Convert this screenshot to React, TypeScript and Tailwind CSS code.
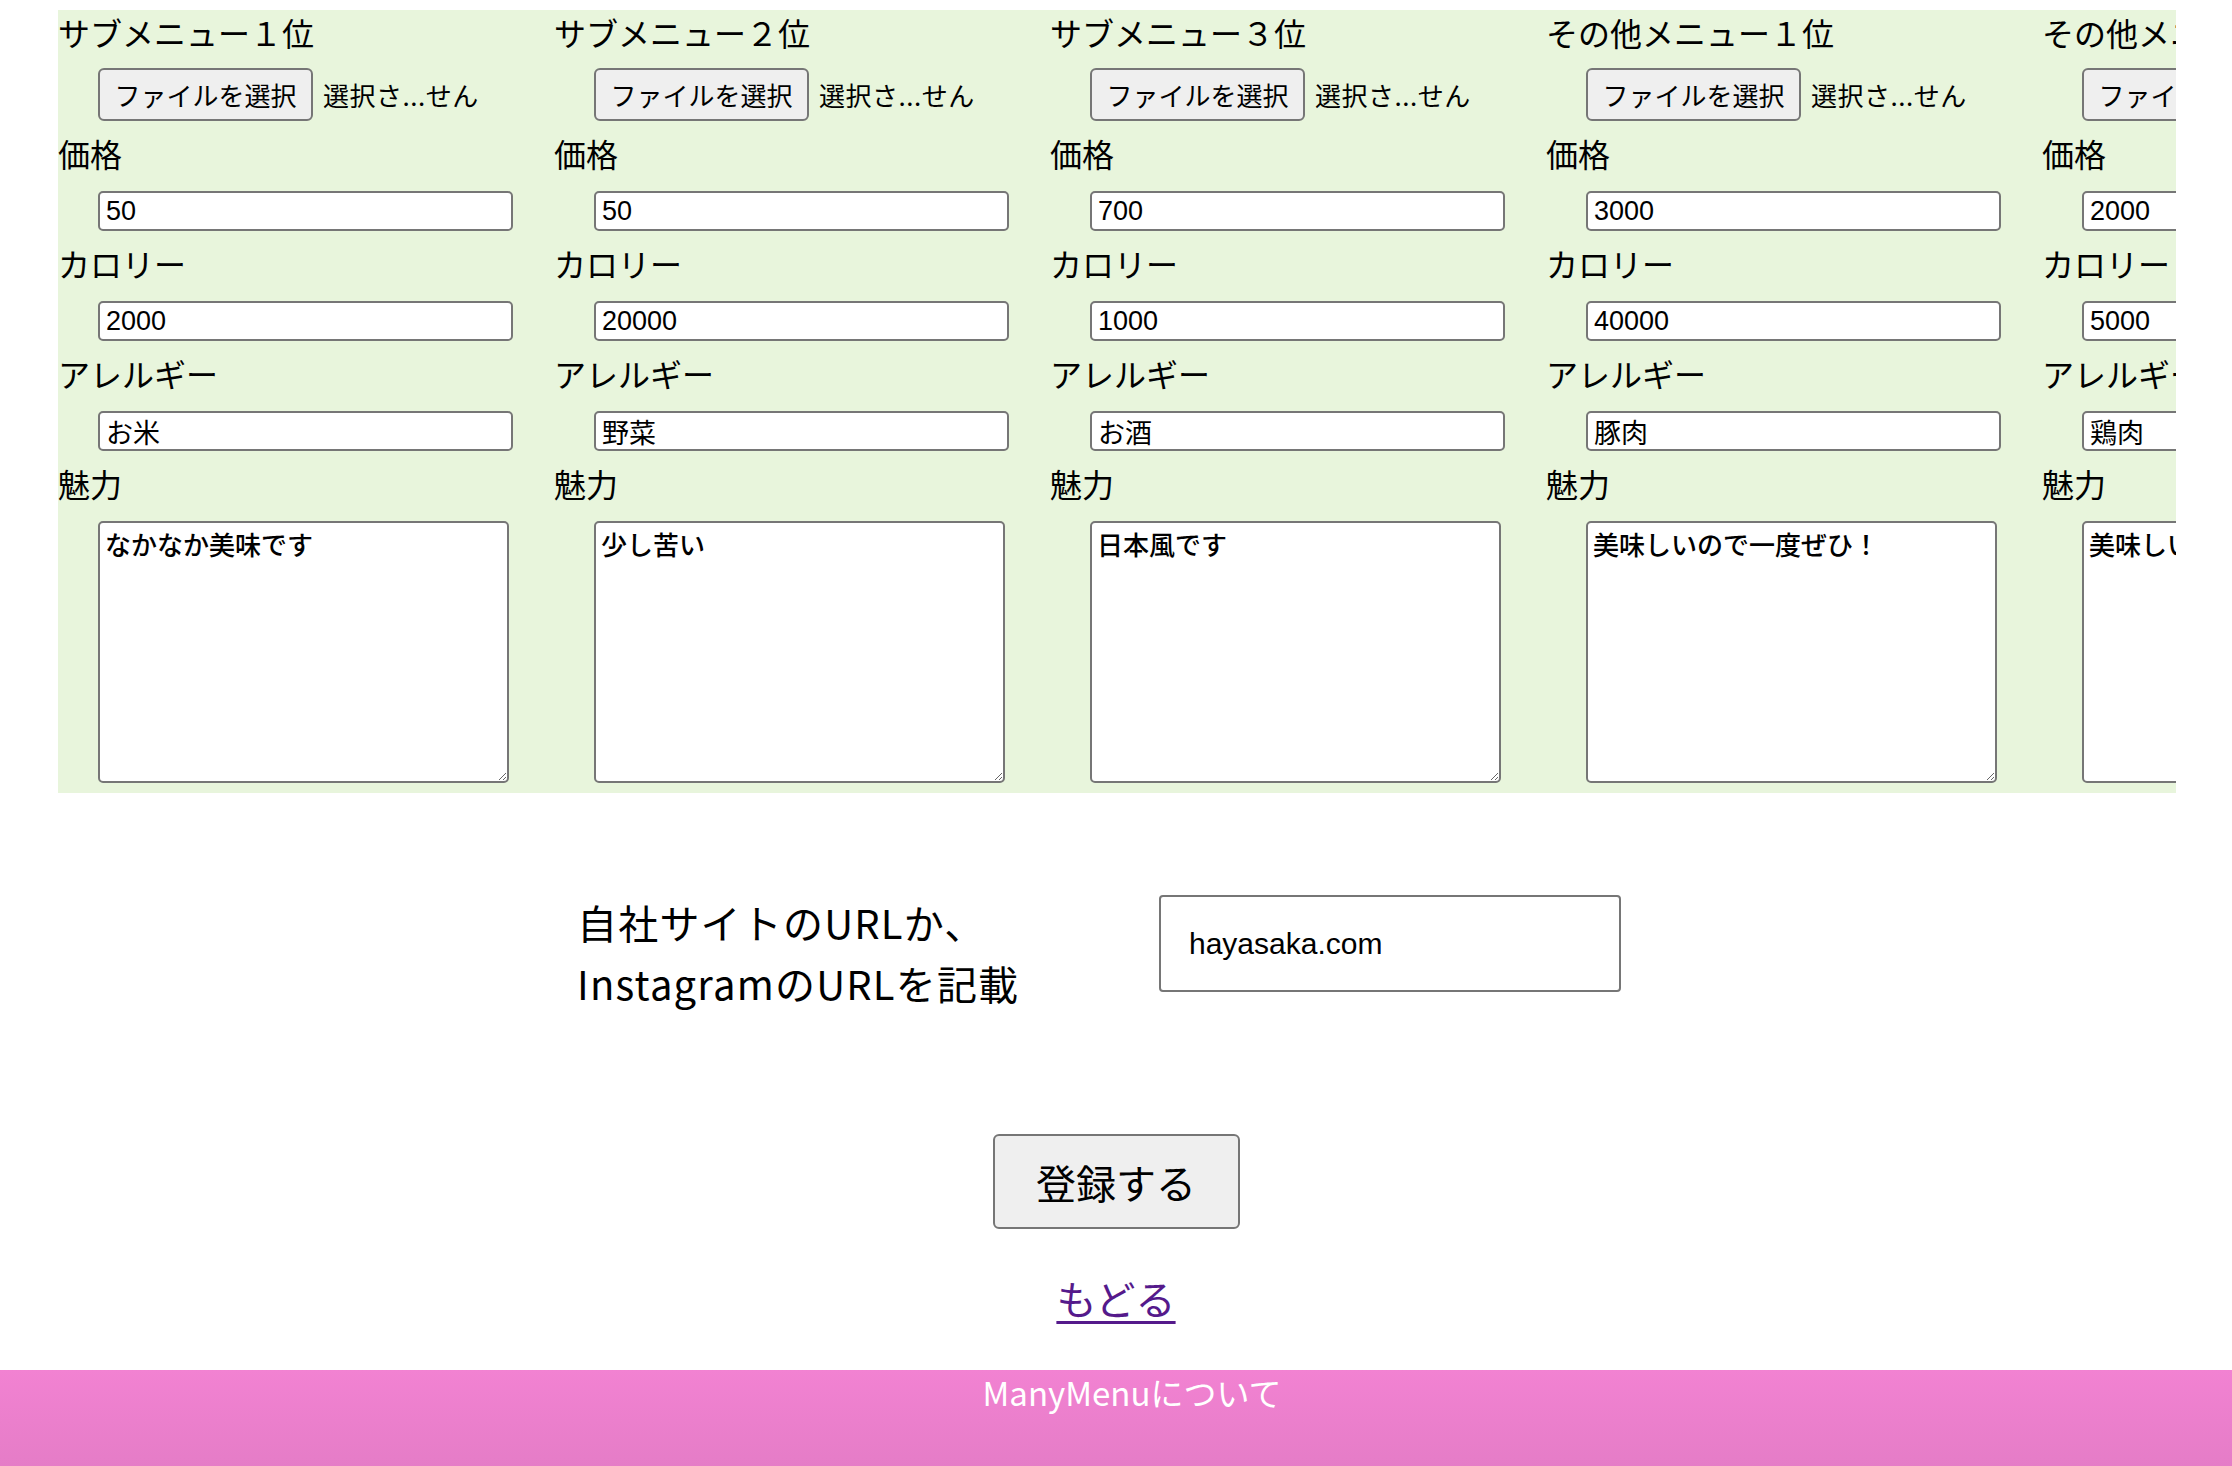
import React from "react";

type Col = {
  title: string;
  price: string;
  cal: string;
  allergy: string;
  charm: string;
};

const cols: Col[] = [
  { title: "サブメニュー１位", price: "50", cal: "2000", allergy: "お米", charm: "なかなか美味です" },
  { title: "サブメニュー２位", price: "50", cal: "20000", allergy: "野菜", charm: "少し苦い" },
  { title: "サブメニュー３位", price: "700", cal: "1000", allergy: "お酒", charm: "日本風です" },
  { title: "その他メニュー１位", price: "3000", cal: "40000", allergy: "豚肉", charm: "美味しいので一度ぜひ！" },
  { title: "その他メニュー２位", price: "2000", cal: "5000", allergy: "鶏肉", charm: "美味しいので一度ぜひ！" },
];

function Label({ children }: { children: React.ReactNode }) {
  return (
    <div className="h-[70px] pb-[6px] flex items-center text-[32px] leading-none text-black whitespace-nowrap">
      {children}
    </div>
  );
}

function TextInput({ value }: { value: string }) {
  return (
    <input
      type="text"
      readOnly
      value={value}
      className="ml-[40px] block w-[415px] h-[40px] box-border border-2 border-[#767676] rounded-[5px] bg-white pl-[6px] text-[27px] leading-none text-black font-['Liberation_Sans','Noto_Sans_CJK_JP',sans-serif] outline-none"
    />
  );
}

function Column({ c }: { c: Col }) {
  return (
    <div className="w-[496px] shrink-0">
      <div className="h-[50px] pb-[6px] flex items-center text-[32px] leading-none whitespace-nowrap">{c.title}</div>
      <div className="mt-[8px] pl-[40px] h-[53px] flex items-center gap-[10px] whitespace-nowrap">
        <button
          type="button"
          className="h-[53px] w-[215px] shrink-0 box-border border-2 border-[#767676] rounded-[6px] bg-[#efefef] text-[26px] leading-none text-black"
        >
          ファイルを選択
        </button>
        <span className="text-[26px] leading-none text-black tracking-[0.5px]">選択さ...せん</span>
      </div>
      <Label>価格</Label>
      <TextInput value={c.price} />
      <Label>カロリー</Label>
      <TextInput value={c.cal} />
      <Label>アレルギー</Label>
      <TextInput value={c.allergy} />
      <Label>魅力</Label>
      <textarea
        readOnly
        value={c.charm}
        className="ml-[40px] block w-[411px] h-[262px] box-border border-2 border-[#767676] rounded-[5px] bg-white px-[5px] py-[3px] text-[26px] leading-[36px] font-medium text-black font-['Noto_Sans_CJK_JP',sans-serif] outline-none"
      />
    </div>
  );
}

export default function App() {
  return (
    <div className="w-[2232px] min-h-[1466px] bg-white text-black font-['Noto_Sans_CJK_JP',sans-serif]">
      <div className="pt-[10px]">
        <div className="ml-[58px] mr-[56px] bg-[#e8f5dc] overflow-hidden pb-[10px]">
          <div className="flex">
            {cols.map((c, i) => (
              <Column key={i} c={c} />
            ))}
          </div>
        </div>
      </div>

      <div className="mt-[102px] pl-[577px] flex items-start">
        <div className="w-[582px] text-[40px] leading-[61px] tracking-[1.2px] -mt-[3px]">
          <div>自社サイトのURLか、</div>
          <div>InstagramのURLを記載</div>
        </div>
        <div className="w-[462px] h-[97px] box-border border-2 border-[#767676] rounded-[4px] bg-white flex items-center pl-[28px] text-[30px] font-['Liberation_Sans','Noto_Sans_CJK_JP',sans-serif]">
          hayasaka.com
        </div>
      </div>

      <div className="mt-[120px] flex justify-center">
        <button
          type="button"
          className="w-[247px] h-[95px] box-border border-2 border-[#767676] rounded-[6px] bg-[#efefef] text-[40px] leading-none text-black"
        >
          登録する
        </button>
      </div>

      <div className="mt-[44px] flex justify-center">
        <a href="#" className="text-[40px] leading-[50px] text-[#551a8b] underline underline-offset-[6px] decoration-[3px]">
          もどる
        </a>
      </div>

      <footer className="mt-[47px] h-[140px] bg-gradient-to-b from-[#f282d2] to-[#df7ac2] flex justify-center pl-[32px]">
        <div className="pt-[2px] text-[33px] leading-[40px] text-white">ManyMenuについて</div>
      </footer>
    </div>
  );
}
